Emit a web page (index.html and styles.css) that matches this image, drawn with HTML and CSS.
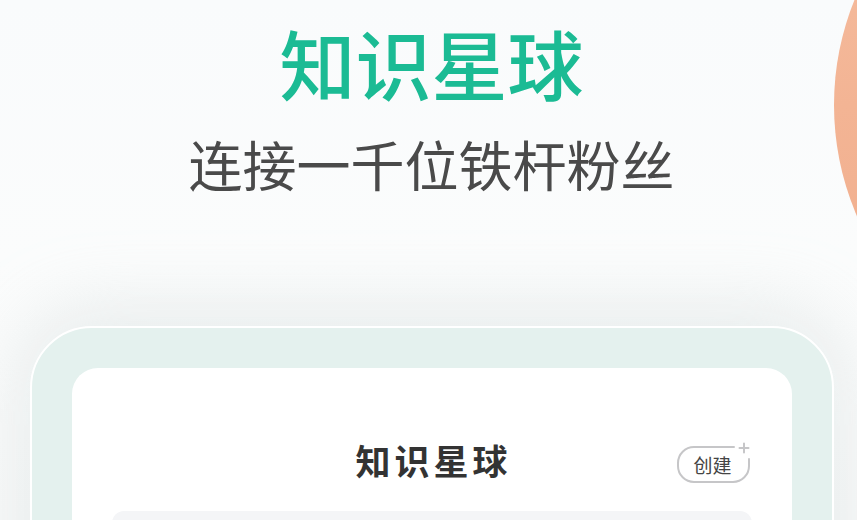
FILE: index.html
```html
<!DOCTYPE html>
<html lang="zh-CN">
<head>
<meta charset="utf-8">
<title>知识星球</title>
<link rel="stylesheet" href="styles.css">
</head>
<body>
<div class="page">
  <div class="orb"></div>
  <header class="hero">
    <h1 class="hero-title">知识星球</h1>
    <p class="hero-sub">连接一千位铁杆粉丝</p>
  </header>
  <section class="frame">
    <div class="card">
      <div class="card-head">
        <span class="spacer"></span>
        <h2 class="card-title">知识星球</h2>
        <span class="create">
          <svg class="create-bg" width="76" height="44" viewBox="0 0 76 44" aria-hidden="true">
            <path d="M58 6 H18 A16 16 0 0 0 2 22 V25 A16 16 0 0 0 18 41 H57 A16 16 0 0 0 73 25 V18" fill="none" stroke="#c6c6c8" stroke-width="2" stroke-linecap="round"/>
            <path d="M63.5 7 H72.5 M68 2.5 V11.5" fill="none" stroke="#c6c6c8" stroke-width="2" stroke-linecap="round"/>
          </svg>
          <span class="create-text">创建</span>
        </span>
      </div>
      <div class="search"></div>
    </div>
  </section>
</div>
</body>
</html>
```
FILE: styles.css
```css
html, body {
  margin: 0;
  padding: 0;
}
body {
  width: 857px;
  height: 520px;
  overflow: hidden;
  background: linear-gradient(180deg, #f9fbfc 0%, #fbfcfc 50%, #f8f9f9 100%);
  font-family: "Noto Sans CJK SC", "Noto Sans", sans-serif;
}
.page {
  position: relative;
  width: 863px;
  height: 520px;
  overflow: hidden;
}
.orb {
  position: absolute;
  left: 834px;
  top: -175px;
  width: 560px;
  height: 560px;
  border-radius: 50%;
  background: linear-gradient(180deg, #f6c0a3 0%, #f3b494 50%, #f0ad8c 100%);
}
.hero {
  display: flex;
  flex-direction: column;
  align-items: center;
  padding-top: 24px;
}
.hero-title {
  margin: 0;
  font-size: 76px;
  line-height: 76px;
  font-weight: 500;
  color: #1bbb94;
}
.hero-sub {
  margin: 37px 0 0;
  font-size: 54px;
  line-height: 54px;
  font-weight: 400;
  color: #4a4a4a;
}
.frame {
  width: 720px;
  margin: 135px auto 0;
  padding: 40px 40px 0;
  height: 300px;
  background: #e4f1ee;
  border: 2px solid #ffffff;
  border-radius: 62px 62px 0 0;
  box-shadow: 0 -10px 70px 8px rgba(205, 215, 215, 0.4);
}
.card {
  background: #ffffff;
  border-radius: 26px 26px 0 0;
  height: 300px;
  padding: 73px 40px 0;
}
.card-head {
  display: grid;
  grid-template-columns: 1fr auto 1fr;
  align-items: center;
  height: 44px;
}
.card-title {
  margin: 0 -4px 7px 0;
  font-size: 35px;
  line-height: 35px;
  font-weight: 700;
  letter-spacing: 4px;
  color: #333333;
}
.create {
  justify-self: end;
  position: relative;
  width: 76px;
  height: 44px;
  display: flex;
  align-items: center;
  justify-content: center;
  box-sizing: border-box;
  padding-top: 3px;
  padding-right: 2px;
}
.create-bg {
  position: absolute;
  left: 0;
  top: 0;
}
.create-text {
  position: relative;
  font-size: 19px;
  line-height: 19px;
  color: #444444;
}
.search {
  margin-top: 26px;
  height: 60px;
  background: #f4f5f7;
  border-radius: 12px 12px 0 0;
}
```
